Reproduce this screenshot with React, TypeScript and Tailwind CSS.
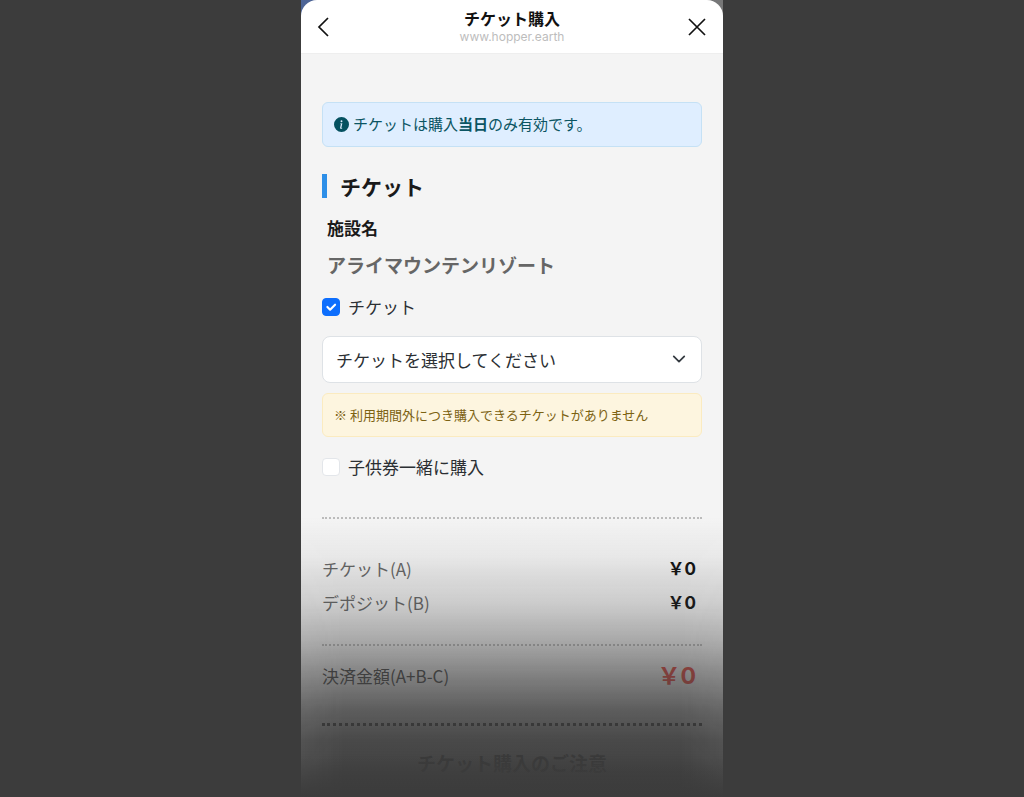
import { useState } from "react";

function Dotted({ bold = false }: { bold?: boolean }) {
  return (
    <hr
      className={
        bold
          ? "border-0 border-t-[3px] border-dotted border-[#222222]"
          : "border-0 border-t-2 border-dotted border-[#bcbcbc]"
      }
    />
  );
}

function CheckOption({
  id,
  label,
  checked,
  onChange,
}: {
  id: string;
  label: string;
  checked: boolean;
  onChange: (value: boolean) => void;
}) {
  return (
    <div className="flex items-center gap-2">
      <span className="relative flex">
        <input
          id={id}
          type="checkbox"
          checked={checked}
          onChange={(e) => onChange(e.target.checked)}
          className="size-[18px] appearance-none rounded-[4px] border border-[#e3e6ea] bg-white checked:border-[#0d6efd] checked:bg-[#0d6efd]"
        />
        {checked && (
          <svg
            viewBox="0 0 20 20"
            className="pointer-events-none absolute inset-0 size-[18px]"
            fill="none"
            stroke="#fff"
            strokeWidth="2.4"
            strokeLinecap="round"
            strokeLinejoin="round"
          >
            <path d="M6 10l3 3 5.5-5.5" />
          </svg>
        )}
      </span>
      <label htmlFor={id} className="text-[17px] leading-6 text-[#2b2f33]">
        {label}
      </label>
    </div>
  );
}

function PriceRow({ label, value }: { label: string; value: string }) {
  return (
    <div className="flex items-center justify-between">
      <dt className="text-[17px] leading-6 text-[#666666]">{label}</dt>
      <dd className="pr-[6px] font-[Inter,'Noto_Sans_CJK_JP',sans-serif] text-[17px] leading-6 font-bold text-[#111111]">
        {value}
      </dd>
    </div>
  );
}

export default function App() {
  const [ticket, setTicket] = useState(true);
  const [child, setChild] = useState(false);

  return (
    <div className="flex min-h-screen justify-center bg-[#3c3c3c] font-['Noto_Sans_CJK_JP',sans-serif]">
      <div className="flex w-full max-w-[422px] flex-col bg-linear-to-r from-[#4c6496] to-[#777777]">
        <header className="flex h-[54px] items-center justify-between rounded-t-2xl border-b border-[#eeeeee] bg-white px-4">
          <button type="button" aria-label="戻る" className="flex size-5 items-center justify-center">
            <svg viewBox="0 0 20 20" className="size-5" fill="none" stroke="#111" strokeWidth="1.7">
              <path d="M11 1L2 10l9 9" />
            </svg>
          </button>
          <div className="flex flex-col items-center">
            <h1 className="text-[16px] leading-5 font-bold text-[#111111]">チケット購入</h1>
            <p className="font-[Inter,sans-serif] text-[12px] leading-[18px] text-[#bdbdbd]">www.hopper.earth</p>
          </div>
          <button type="button" aria-label="閉じる" className="flex size-5 items-center justify-center">
            <svg viewBox="0 0 20 20" className="size-5" fill="none" stroke="#111" strokeWidth="1.7">
              <path d="M2 2l16 16M18 2L2 18" />
            </svg>
          </button>
        </header>

        <main className="flex grow flex-col bg-[#f4f4f4] pt-12">
          <div className="flex flex-col px-[21px]">
            <div className="flex h-[45px] items-center gap-1 rounded-md border border-[#c5e1f5] bg-[#dfeeff] px-[11px] text-[15px] text-[#0b5563]">
              <svg viewBox="0 0 16 16" className="size-[15px] shrink-0" fill="#055160">
                <path d="M8 16A8 8 0 1 0 8 0a8 8 0 0 0 0 16m.93-9.412-1 4.705c-.07.34.029.533.304.533.194 0 .487-.07.686-.246l-.088.416c-.287.346-.92.598-1.465.598-.703 0-1.002-.422-.808-1.319l.738-3.468c.064-.293.006-.399-.287-.47l-.451-.081.082-.381zM8 5.5a1 1 0 1 1 0-2 1 1 0 0 1 0 2" />
              </svg>
              <p>
                チケットは購入<strong>当日</strong>のみ有効です。
              </p>
            </div>

            <h2 className="mt-[27px] border-l-[5px] border-[#2d8fe8] pl-[13px] text-[21px] leading-6 font-bold text-[#1a1a1a]">
              チケット
            </h2>
            <h3 className="mt-[18px] pl-[5px] text-[17px] leading-6 font-bold text-[#1a1a1a]">施設名</h3>
            <p className="mt-[13px] mb-[18px] pl-[5px] text-[19px] leading-6 font-bold text-[#666666]">
              アライマウンテンリゾート
            </p>
            <CheckOption id="ticket" label="チケット" checked={ticket} onChange={setTicket} />

            <div className="relative mt-[17px]">
              <select
                aria-label="チケットの種類"
                className="block h-[47px] w-full appearance-none rounded-lg border border-[#dee2e6] bg-white px-[13px] text-[17px] text-[#2b2f33]"
              >
                <option>チケットを選択してください</option>
              </select>
              <svg
                viewBox="0 0 16 16"
                className="pointer-events-none absolute top-4 right-4 size-[14px]"
                fill="none"
                stroke="#343a40"
                strokeWidth="2"
                strokeLinecap="round"
                strokeLinejoin="round"
              >
                <path d="m2 5 6 6 6-6" />
              </svg>
            </div>

            <p className="mt-[10px] flex h-11 items-center rounded-md border border-[#fbebc0] bg-[#fdf5df] px-[11px] text-[13px] text-[#7c6212]">
              ※ 利用期間外につき購入できるチケットがありません
            </p>

            <div className="mt-[18px]">
              <CheckOption id="child" label="子供券一緒に購入" checked={child} onChange={setChild} />
            </div>
          </div>

          <section className="relative mt-[38px] grow px-[21px]">
            <Dotted />
            <dl className="mt-[38px] mb-[29px] flex flex-col gap-[10px]">
              <PriceRow label="チケット(A)" value="￥0" />
              <PriceRow label="デポジット(B)" value="￥0" />
            </dl>
            <Dotted />
            <dl className="mt-[18px] mb-[35px] flex items-center justify-between">
              <dt className="text-[17px] leading-6 text-[#444444]">決済金額(A+B-C)</dt>
              <dd className="pr-[6px] font-[Inter,'Noto_Sans_CJK_JP',sans-serif] text-[23px] leading-6 font-bold text-[#e8433a]">
                ￥0
              </dd>
            </dl>
            <Dotted bold />
            <h2 className="mt-[23px] text-center text-[19px] leading-7 font-bold text-[#111111]">
              チケット購入のご注意
            </h2>
            <div className="pointer-events-none absolute inset-0 mask-[linear-gradient(to_right,#000000f0,#000_10%,#000_90%,#000000f0)] bg-[linear-gradient(to_bottom,#3c3c3c00_0%,#3c3c3c10_14%,#3c3c3c20_20%,#3c3c3c38_31%,#3c3c3c68_44%,#3c3c3ca6_58%,#3c3c3cd2_69%,#3c3c3cee_80%,#3c3c3cf8_90%,#3c3c3c_100%)]" />
            <div className="pointer-events-none absolute inset-x-0 bottom-0 h-10 bg-linear-to-b from-[#3c3c3c00] to-[#3c3c3c]" />
          </section>
        </main>
      </div>
    </div>
  );
}
